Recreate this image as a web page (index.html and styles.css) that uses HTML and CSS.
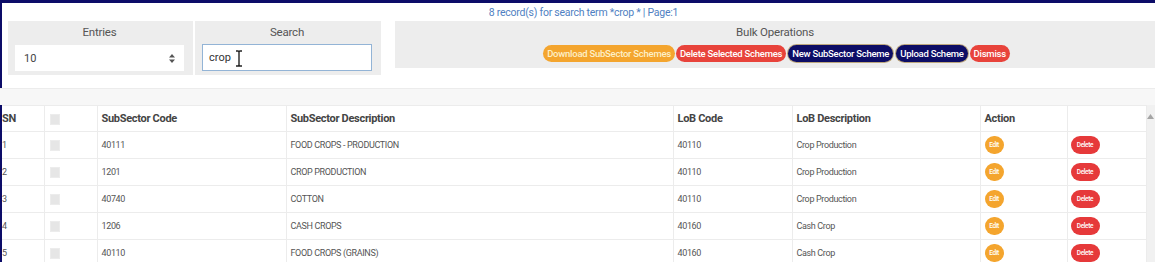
FILE: index.html
```html
<!DOCTYPE html>
<html lang="en">

<head>
    <meta charset="UTF-8">
    <meta name="viewport" content="width=device-width, initial-scale=1.0">
    <title>SubSector Schemes</title>
    <link rel="stylesheet" href="styles.css">
</head>

<body>
    <div class="page">
        <div class="top">
            <div class="records">8 record(s) for search term *crop * | Page:1</div>
            <div class="controls">
                <div class="panel entries">
                    <div class="panel-label">Entries</div>
                    <div class="select">
                        <span>10</span>
                        <svg width="6" height="9" viewBox="0 0 6 9">
                            <path d="M3 0 L6 3.5 L0 3.5 Z M0 5.5 L6 5.5 L3 9 Z" fill="#555" />
                        </svg>
                    </div>
                </div>
                <div class="panel search">
                    <div class="panel-label">Search</div>
                    <div class="input">
                        <span>crop</span>
                        <svg class="ibeam" width="8" height="17" viewBox="0 0 8 17">
                            <path d="M1 1 H3 Q4 1 4 2.5 Q4 1 5 1 H7 M4 2.5 V14.5 M1 16 H3 Q4 16 4 14.5 Q4 16 5 16 H7"
                                fill="none" stroke="#222" stroke-width="1.4" />
                        </svg>
                    </div>
                </div>
                <div class="panel bulk">
                    <div class="panel-label">Bulk Operations</div>
                    <div class="buttons">
                        <span class="btn orange">Download SubSector Schemes</span>
                        <span class="btn red">Delete Selected Schemes</span>
                        <span class="btn navy">New SubSector Scheme</span>
                        <span class="btn navy">Upload Scheme</span>
                        <span class="btn red">Dismiss</span>
                    </div>
                </div>
            </div>
        </div>

        <div class="band"></div>

        <div class="grid-wrap">
            <div class="table-holder">
                <table class="grid">
                    <colgroup>
                        <col style="width:46px">
                        <col style="width:53px">
                        <col style="width:189px">
                        <col style="width:387px">
                        <col style="width:119px">
                        <col style="width:188px">
                        <col style="width:87px">
                        <col style="width:79px">
                    </colgroup>
                    <thead>
                        <tr>
                            <th>SN</th>
                            <th><span class="check"></span></th>
                            <th>SubSector Code</th>
                            <th>SubSector Description</th>
                            <th>LoB Code</th>
                            <th>LoB Description</th>
                            <th>Action</th>
                            <th></th>
                        </tr>
                    </thead>
                    <tbody>
                        <tr>
                            <td>1</td>
                            <td><span class="check"></span></td>
                            <td>40111</td>
                            <td>FOOD CROPS - PRODUCTION</td>
                            <td>40110</td>
                            <td>Crop Production</td>
                            <td><span class="pill edit">Edit</span></td>
                            <td><span class="pill delete">Delete</span></td>
                        </tr>
                        <tr>
                            <td>2</td>
                            <td><span class="check"></span></td>
                            <td>1201</td>
                            <td>CROP PRODUCTION</td>
                            <td>40110</td>
                            <td>Crop Production</td>
                            <td><span class="pill edit">Edit</span></td>
                            <td><span class="pill delete">Delete</span></td>
                        </tr>
                        <tr>
                            <td>3</td>
                            <td><span class="check"></span></td>
                            <td>40740</td>
                            <td>COTTON</td>
                            <td>40110</td>
                            <td>Crop Production</td>
                            <td><span class="pill edit">Edit</span></td>
                            <td><span class="pill delete">Delete</span></td>
                        </tr>
                        <tr>
                            <td>4</td>
                            <td><span class="check"></span></td>
                            <td>1206</td>
                            <td>CASH CROPS</td>
                            <td>40160</td>
                            <td>Cash Crop</td>
                            <td><span class="pill edit">Edit</span></td>
                            <td><span class="pill delete">Delete</span></td>
                        </tr>
                        <tr>
                            <td>5</td>
                            <td><span class="check"></span></td>
                            <td>40110</td>
                            <td>FOOD CROPS (GRAINS)</td>
                            <td>40160</td>
                            <td>Cash Crop</td>
                            <td><span class="pill edit">Edit</span></td>
                            <td><span class="pill delete">Delete</span></td>
                        </tr>
                    </tbody>
                </table>
            </div>
            <div class="scrollbar">
                <svg width="7" height="5" viewBox="0 0 7 5">
                    <path d="M3.5 0 L7 5 L0 5 Z" fill="#a5a5a5" />
                </svg>
            </div>
        </div>
    </div>
</body>

</html>
```

FILE: styles.css
```css
* {
    margin: 0;
    padding: 0;
    box-sizing: border-box;
}

body {
    font-family: Roboto, "Liberation Sans", sans-serif;
    background-color: #fff;
    color: #555;
    width: 1155px;
    height: 262px;
    overflow: hidden;
}

.page {
    border-top: 3px solid #0c0c68;
}

.top {
    border-left: 2px solid #0c0c68;
    height: 85px;
}

.records {
    text-align: center;
    padding-left: 10px;
    padding-top: 3px;
    height: 18px;
    line-height: 14px;
    font-size: 10.5px;
    letter-spacing: -0.25px;
    color: #4f7fc2;
}

.controls {
    display: flex;
    align-items: flex-start;
    padding-left: 6px;
}

.panel {
    background-color: #ededed;
    padding-top: 4px;
}

.panel-label {
    text-align: center;
    font-size: 11.5px;
    line-height: 14px;
    letter-spacing: -0.2px;
    color: #555;
    margin-bottom: 6px;
}

.entries {
    width: 185px;
    height: 54px;
    padding-left: 7px;
    padding-right: 9px;
}

.search {
    width: 186px;
    height: 54px;
    margin-left: 2px;
    padding-left: 7px;
    padding-right: 9px;
}

.select {
    display: flex;
    justify-content: space-between;
    align-items: center;
    background-color: #fff;
    height: 26px;
    padding: 0 9px 0 9px;
    font-size: 11px;
    color: #444;
}

.input {
    display: flex;
    align-items: center;
    gap: 4px;
    height: 27px;
    margin-top: -1px;
    border: 1px solid #93b4d6;
    background-color: #fff;
    padding-left: 6px;
    font-size: 11px;
    color: #333;
}

.ibeam {
    margin-top: 2px;
}

.bulk {
    flex: 1;
    height: 47px;
    margin-left: 14px;
}

.buttons {
    display: flex;
    justify-content: center;
    gap: 1px;
    padding-left: 3px;
}

.btn {
    display: inline-block;
    height: 17px;
    line-height: 17px;
    border-radius: 9px;
    padding: 0 4px;
    font-size: 9.5px;
    font-weight: 500;
    letter-spacing: -0.25px;
    color: #fff;
}

.orange {
    background-color: #f4a52e;
    color: #fdf0c8;
}

.red {
    background-color: #e8433b;
}

.navy {
    background-color: #0d0d66;
    box-shadow: 0 0 0 1px #bda77e;
    margin: 0 1px;
}

.band {
    height: 17px;
    background-color: #f7f7f7;
    border-top: 1px solid #ececec;
}

.grid-wrap {
    display: flex;
    border-left: 2px solid #0c0c68;
    overflow: hidden;
}

.table-holder {
    flex: 1;
    margin-left: -4px;
}

.grid {
    width: 1148px;
    table-layout: fixed;
    border-collapse: collapse;
}

.grid th,
.grid td {
    text-align: left;
    padding-left: 4px;
    border-right: 1px solid #ececec;
    border-bottom: 1px solid #ececec;
    white-space: nowrap;
    overflow: hidden;
}

.grid th:first-child,
.grid td:first-child {
    padding-left: 4px;
}

.grid th {
    height: 26px;
    font-size: 11px;
    font-weight: 700;
    letter-spacing: -0.3px;
    color: #444;
    border-top: 1px solid #ececec;
}

.grid td {
    height: 27px;
    font-size: 9px;
    letter-spacing: -0.35px;
    color: #555;
}

.grid th:nth-child(2),
.grid td:nth-child(2) {
    padding-left: 5px;
}

.check {
    display: inline-block;
    width: 10px;
    height: 11px;
    background-color: #e6e6e6;
    border: 1px solid #ececec;
    vertical-align: middle;
}

.pill {
    display: inline-block;
    height: 18px;
    line-height: 18px;
    border-radius: 9px;
    font-size: 6.5px;
    font-weight: 500;
    color: #fff;
    text-align: center;
    vertical-align: middle;
}

.edit {
    width: 19px;
    background-color: #f4a52e;
}

.delete {
    width: 29px;
    margin-left: -1px;
    background-color: #e6393a;
}

.scrollbar {
    width: 9px;
    background-color: #f1f1f1;
    padding-top: 9px;
    display: flex;
    justify-content: center;
    align-items: flex-start;
}
```
